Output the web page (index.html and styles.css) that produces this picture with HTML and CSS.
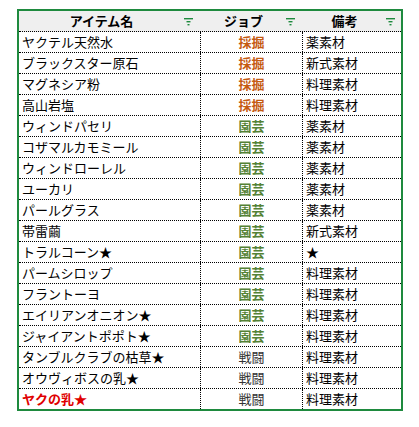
FILE: index.html
```html
<!DOCTYPE html>
<html lang="ja">
<head>
<meta charset="utf-8">
<link rel="stylesheet" href="styles.css">
</head>
<body>
<div class="wrap">
  <div class="sheet">
    <div class="row head">
      <div class="cell hc"><span class="ht">アイテム名</span><svg class="flt" width="9" height="8" viewBox="0 0 9 8"><rect x="0" y="0" width="9" height="1.4"/><rect x="2.5" y="3" width="4" height="1.4"/><rect x="3.5" y="6" width="2" height="1.4"/></svg></div>
      <div class="cell hc"><span class="ht">ジョブ</span><svg class="flt" width="9" height="8" viewBox="0 0 9 8"><rect x="0" y="0" width="9" height="1.4"/><rect x="2.5" y="3" width="4" height="1.4"/><rect x="3.5" y="6" width="2" height="1.4"/></svg></div>
      <div class="cell hc last"><span class="ht">備考</span><svg class="flt" width="9" height="8" viewBox="0 0 9 8"><rect x="0" y="0" width="9" height="1.4"/><rect x="2.5" y="3" width="4" height="1.4"/><rect x="3.5" y="6" width="2" height="1.4"/></svg></div>
    </div>
    <div class="row"><div class="cell c1">ヤクテル天然水</div><div class="cell c2 mine">採掘</div><div class="cell c3">薬素材</div></div>
    <div class="row"><div class="cell c1">ブラックスター原石</div><div class="cell c2 mine">採掘</div><div class="cell c3">新式素材</div></div>
    <div class="row"><div class="cell c1">マグネシア粉</div><div class="cell c2 mine">採掘</div><div class="cell c3">料理素材</div></div>
    <div class="row"><div class="cell c1">高山岩塩</div><div class="cell c2 mine">採掘</div><div class="cell c3">料理素材</div></div>
    <div class="row"><div class="cell c1">ウィンドパセリ</div><div class="cell c2 garden">園芸</div><div class="cell c3">薬素材</div></div>
    <div class="row"><div class="cell c1">コザマルカモミール</div><div class="cell c2 garden">園芸</div><div class="cell c3">薬素材</div></div>
    <div class="row"><div class="cell c1">ウィンドローレル</div><div class="cell c2 garden">園芸</div><div class="cell c3">薬素材</div></div>
    <div class="row"><div class="cell c1">ユーカリ</div><div class="cell c2 garden">園芸</div><div class="cell c3">薬素材</div></div>
    <div class="row"><div class="cell c1">パールグラス</div><div class="cell c2 garden">園芸</div><div class="cell c3">薬素材</div></div>
    <div class="row"><div class="cell c1">帯雷繭</div><div class="cell c2 garden">園芸</div><div class="cell c3">新式素材</div></div>
    <div class="row"><div class="cell c1">トラルコーン★</div><div class="cell c2 garden">園芸</div><div class="cell c3">★</div></div>
    <div class="row"><div class="cell c1">パームシロップ</div><div class="cell c2 garden">園芸</div><div class="cell c3">料理素材</div></div>
    <div class="row"><div class="cell c1">フラントーヨ</div><div class="cell c2 garden">園芸</div><div class="cell c3">料理素材</div></div>
    <div class="row"><div class="cell c1">エイリアンオニオン★</div><div class="cell c2 garden">園芸</div><div class="cell c3">料理素材</div></div>
    <div class="row"><div class="cell c1">ジャイアントポポト★</div><div class="cell c2 garden">園芸</div><div class="cell c3">料理素材</div></div>
    <div class="row"><div class="cell c1">タンブルクラブの枯草★</div><div class="cell c2 fight">戦闘</div><div class="cell c3">料理素材</div></div>
    <div class="row"><div class="cell c1">オウヴィボスの乳★</div><div class="cell c2 fight">戦闘</div><div class="cell c3">料理素材</div></div>
    <div class="row"><div class="cell c1 red">ヤクの乳★</div><div class="cell c2 fight">戦闘</div><div class="cell c3">料理素材</div></div>
  </div>
</div>
</body>
</html>
```

FILE: styles.css
```css
* { box-sizing: border-box; }
html, body { margin: 0; padding: 0; background: #ffffff; }
body {
  font-family: "Noto Sans CJK JP", "Noto Sans", sans-serif;
  font-size: 13px;
  color: #000;
}
.wrap { padding: 9px 0 0 17px; }
.sheet {
  width: 386px;
  border: 2px solid #1e8a3e;
}
.row {
  display: grid;
  grid-template-columns: 182px 102px 98px;
  height: 21px;
  border-bottom: 1px dotted #000;
}
.row:last-child { border-bottom: none; height: 20px; }
.head { background: #efefef; }
.cell {
  display: flex;
  align-items: center;
  line-height: 20px;
  white-space: nowrap;
  overflow: hidden;
}
.c1, .c2 { border-right: 1px dotted #000; }
.c1 { padding-left: 3px; }
.c2 { justify-content: center; }
.c3 { padding-left: 3px; }
.hc { padding-right: 8px; }
.hc.last { padding-right: 6px; }
.ht { flex: 1; text-align: center; font-weight: bold; }
.flt { fill: #1e8a3e; flex: none; margin-top: 1px; }
.mine { color: #c55a11; font-weight: bold; }
.garden { color: #548235; font-weight: bold; }
.fight { color: #333333; }
.red { color: #e00000; font-weight: bold; }
```
